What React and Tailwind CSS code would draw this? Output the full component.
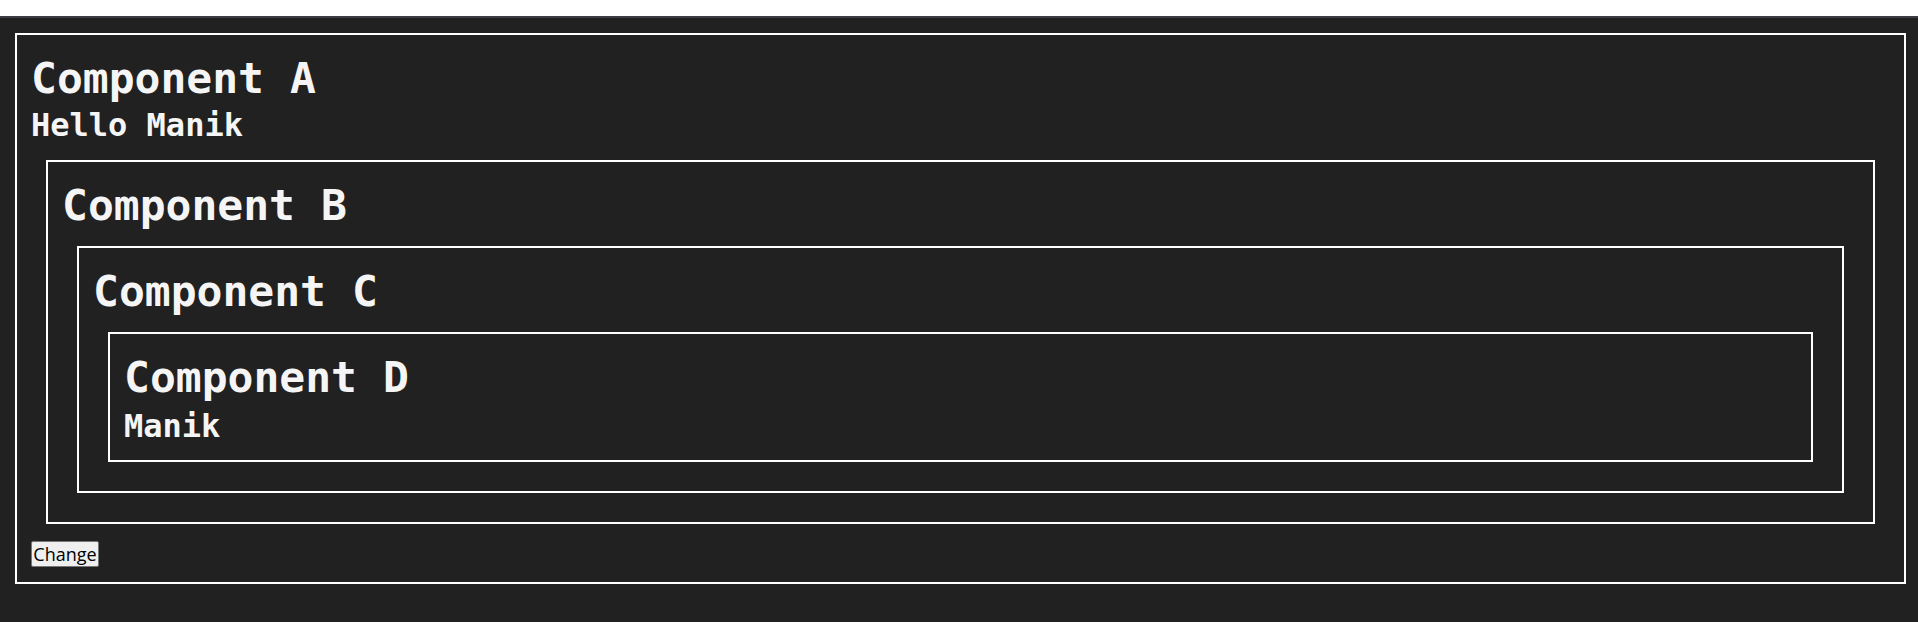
import React from "react";

const mono = { fontFamily: '"DejaVu Sans Mono", "Liberation Mono", monospace' };

function Box({ title, children, className = "" }) {
  return (
    <div className={`border-2 border-white px-[14px] pt-[16px] pb-[15px] ${className}`}>
      <h1 className="m-0 mt-[2px] text-[43px] leading-[50px] font-bold text-[#f5f5f5]" style={mono}>
        {title}
      </h1>
      {children}
    </div>
  );
}

export default function App() {
  return (
    <div className="min-h-screen w-full bg-white flex flex-col">
      <div className="h-[16px] bg-white" />
      <div className="h-[2px] bg-[#3b3c44]" />
      <div className="bg-[#212121] flex-1 pt-[15px]">
        <div className="ml-[15px] mr-[12px] border-2 border-white px-[14px] pt-[16px] pb-[15px]">
          <h1 className="m-0 mt-[2px] text-[43px] leading-[50px] font-bold text-[#f5f5f5]" style={mono}>
            Component A
          </h1>
          <h2 className="m-0 mt-[4px] text-[32px] leading-[37px] font-bold text-[#f5f5f5]" style={mono}>
            Hello Manik
          </h2>
          <Box title="Component B" className="mx-[15px] mt-[16px] mb-[17px]">
            <Box title="Component C" className="mx-[15px] mt-[16px] mb-[14px]">
              <Box title="Component D" className="mx-[15px] mt-[16px] mb-[14px]">
                <h2 className="m-0 mt-[6px] text-[32px] leading-[37px] font-bold text-[#f5f5f5]" style={mono}>
                  Manik
                </h2>
              </Box>
            </Box>
          </Box>
          <button
            className="block h-[26px] w-[68px] px-0 bg-[#efefef] border border-[#767676] rounded-[2px] text-black text-[18px] leading-[24px] text-center"
            style={{ fontFamily: '"Open Sans", "Noto Sans", sans-serif' }}
          >
            Change
          </button>
        </div>
      </div>
    </div>
  );
}
